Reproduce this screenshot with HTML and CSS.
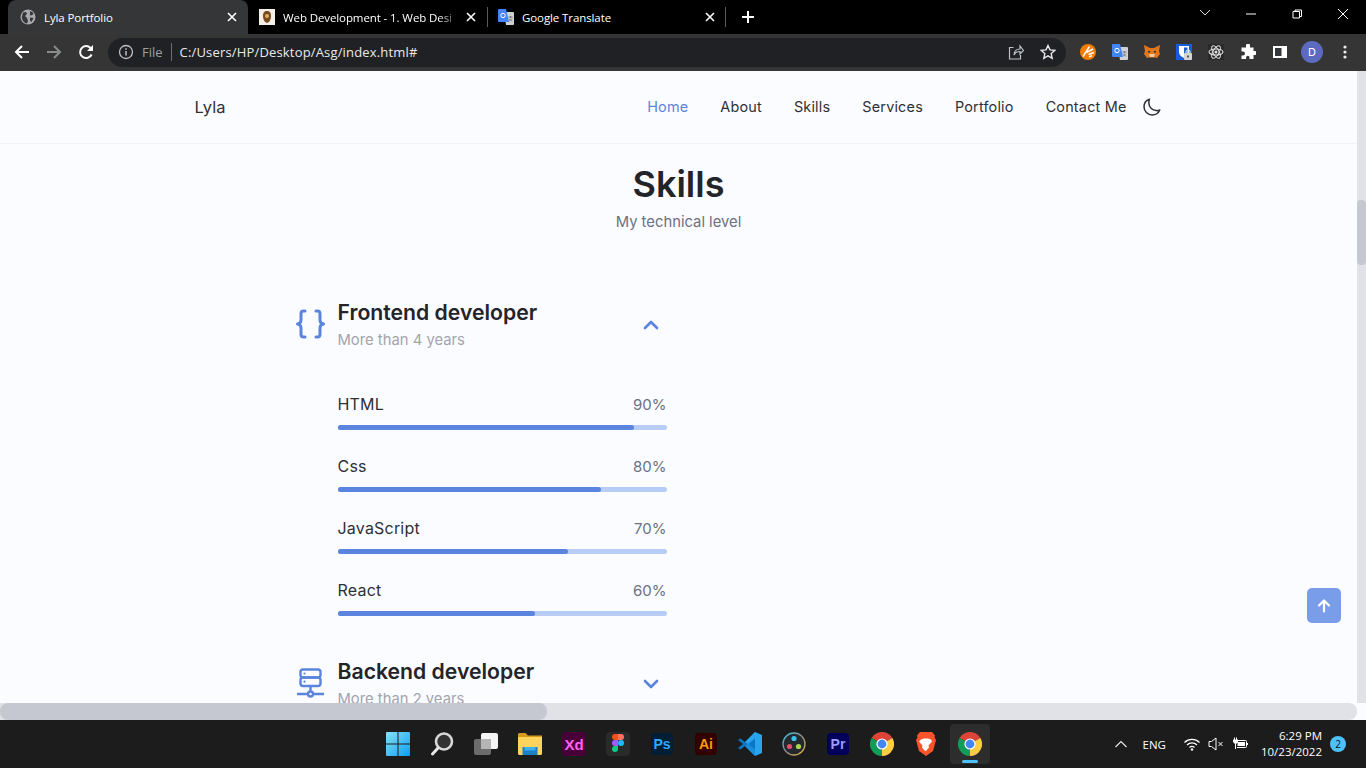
FILE: index.html
```html
<!DOCTYPE html>
<html lang="en">
  <head>
    <meta charset="UTF-8">
    <meta name="viewport" content="width=device-width, initial-scale=1.0">
    <title>Lyla Portfolio</title>
    <link rel="stylesheet" href="styles.css">
  </head>
  <body>
    <svg class="defs" width="0" height="0">
      <symbol id="chrome" viewBox="0 0 24 24">
        <path fill="#db4437" d="M12 12 1.6 6A12 12 0 0 1 22.4 6Z"/>
        <path fill="#0f9d58" d="M12 12 1.6 6A12 12 0 0 0 12 24Z"/>
        <path fill="#ffcd40" d="M12 12 22.4 6A12 12 0 0 1 12 24Z"/>
        <circle cx="12" cy="12" r="5.6" fill="#fff"/>
        <circle cx="12" cy="12" r="4.4" fill="#4285f4"/>
      </symbol>
      <symbol id="translate" viewBox="0 0 16 16">
        <path fill="#cfd2d6" d="M6 3h9a1 1 0 0 1 1 1v11a1 1 0 0 1-1 1H8Z"/>
        <path fill="#4285f4" d="M1 0h7l3 13H1a1 1 0 0 1-1-1V1a1 1 0 0 1 1-1Z"/>
        <circle cx="5" cy="6.500" r="2.200" fill="none" stroke="#fff" stroke-width="1"/>
        <path stroke="#777" stroke-width="1" d="M10.500 8h4M12.500 7v2M11 9.500l3 3M14 9.500l-3 3"/>
      </symbol>
      <symbol id="close" viewBox="0 0 10 10">
        <path stroke="#fff" stroke-width="1.600" d="M1 1l8 8M9 1l-8 8"/>
      </symbol>
    </svg>

    <div class="tabstrip">
      <div class="tab tab-active">
        <svg class="favicon" viewBox="0 0 16 16">
          <circle cx="8" cy="8" r="7.500" fill="#a8aaad"/>
          <path fill="#35363a" d="M3 3.500 6 3l1 2-2 2 2 2 1 3-1 2.500C4 14 2 11 1.800 8ZM10 2l3.500 2-1 2-2.500 .5ZM10 8.500l3.500 .5-2 4-1.500-1.500Z"/>
        </svg>
        <span class="tab-title">Lyla Portfolio</span>
        <svg class="tab-close"><use href="#close"/></svg>
      </div>
      <div class="tab">
        <svg class="favicon" viewBox="0 0 16 16">
          <rect width="16" height="16" fill="#f4f0e8"/>
          <path fill="#7a4a22" d="M8 2c3 0 4 2 4 5s-1 6-4 7c-3-1-4-4-4-7s1-5 4-5Z"/>
          <circle cx="8" cy="7" r="2" fill="#d8b35c"/>
        </svg>
        <span class="tab-title tab-title-cut">Web Development - 1. Web Desi</span>
        <svg class="tab-close"><use href="#close"/></svg>
      </div>
      <div class="tab tab-sep">
        <svg class="favicon"><use href="#translate"/></svg>
        <span class="tab-title">Google Translate</span>
        <svg class="tab-close"><use href="#close"/></svg>
      </div>
      <div class="new-tab">
        <svg width="12" height="12" viewBox="0 0 12 12"><path stroke="#fff" stroke-width="2" d="M6 0v12M0 6h12"/></svg>
      </div>
      <div class="win-controls">
        <svg class="win-btn" viewBox="0 0 46 28"><path fill="none" stroke="#ddd" d="M18 10l5 5 5-5"/></svg>
        <svg class="win-btn" viewBox="0 0 46 28"><path stroke="#fff" d="M18 14h10"/></svg>
        <svg class="win-btn" viewBox="0 0 46 28"><path fill="none" stroke="#fff" d="M19 11.500h6.500V18H19ZM21 11.500V10h6.500v6.500H25.500"/></svg>
        <svg class="win-btn" viewBox="0 0 46 28"><path stroke="#fff" d="M18 9l10 10M28 9l-10 10"/></svg>
      </div>
    </div>

    <div class="toolbar">
      <svg class="tool-icon" viewBox="0 0 16 16"><path fill="none" stroke="#fff" stroke-width="2" d="M15 8H2M8 2 2 8l6 6"/></svg>
      <svg class="tool-icon" viewBox="0 0 16 16"><path fill="none" stroke="#8a8b8d" stroke-width="2" d="M1 8h13M8 2l6 6-6 6"/></svg>
      <svg class="tool-icon" viewBox="0 0 16 16"><path fill="none" stroke="#fff" stroke-width="2" d="M13.600 10.500A6 6 0 1 1 12.500 4"/><path fill="#fff" d="M15 1v6H9Z"/></svg>
      <div class="omnibox">
        <svg class="omni-info" viewBox="0 0 16 16"><circle cx="8" cy="8" r="6.500" fill="none" stroke="#bdc1c6" stroke-width="1.300"/><path stroke="#bdc1c6" stroke-width="1.500" d="M8 7v4.500M8 4.300v1.500"/></svg>
        <span class="omni-scheme">File</span>
        <span class="omni-url">C:/Users/HP/Desktop/Asg/index.html#</span>
        <svg class="omni-icon" viewBox="0 0 16 16"><path fill="none" stroke="#bdc1c6" stroke-width="1.200" d="M5.500 3.500H1.500V15h11v-4M6 11c0-4 3-6 6-6V2l3.500 4.500L12 10V7.500c-2.500 0-5 1-6 3.500Z"/></svg>
        <svg class="omni-icon" viewBox="0 0 16 16"><path fill="none" stroke="#e8eaed" stroke-width="1.400" d="m8 1.500 2 4.400 4.800 .5-3.600 3.200 1 4.700L8 11.900l-4.200 2.400 1-4.700L1.200 6.400 6 5.900Z"/></svg>
      </div>
      <div class="extensions">
        <svg class="ext-icon" viewBox="0 0 16 16"><circle cx="8" cy="8" r="8" fill="#f57c00"/><path fill="none" stroke="#fff" stroke-width="1.500" d="M3 12.500 9.500 2.500M6.500 8.500l6.500-3.500M8.500 10.500l5.500-2M9 13l3-1.500"/></svg>
        <svg class="ext-icon"><use href="#translate"/></svg>
        <svg class="ext-icon" viewBox="0 0 16 16"><path fill="#e2761b" d="M0 1l6 3h4l6-3-1 6 1 3-3 4-2-.5H5L3 14l-3-4 1-3Z"/><path fill="#f6c6a0" d="M5 10h6l-1 3H6Z"/><path fill="#233447" d="M4 7h2v1.500H4ZM10 7h2v1.500h-2Z"/></svg>
        <svg class="ext-icon" viewBox="0 0 16 16"><rect width="16" height="16" fill="#175ddc"/><path fill="#fff" d="M3 2h10v6c0 3-2.500 5-5 6-2.500-1-5-3-5-6Z"/><path fill="#175ddc" d="M8 3.500h3.500V8c0 1.500-1.500 3-3.500 4Z"/><rect x="8" y="9" width="8" height="7" rx="1" fill="#d5d5d5"/><path fill="none" stroke="#d5d5d5" stroke-width="1.200" d="M10 9.500V8a2 2 0 0 1 4 0v1.500"/><rect x="11" y="11.500" width="2" height="2" fill="#555"/></svg>
        <svg class="ext-icon" viewBox="0 0 16 16"><rect width="16" height="16" fill="#2a2a2a"/><g fill="none" stroke="#ddd" stroke-width="1.100"><ellipse cx="8" cy="8" rx="7" ry="3"/><ellipse cx="8" cy="8" rx="7" ry="3" transform="rotate(60 8 8)"/><ellipse cx="8" cy="8" rx="7" ry="3" transform="rotate(120 8 8)"/></g><circle cx="8" cy="8" r="1.500" fill="#ddd"/></svg>
        <svg class="ext-icon" viewBox="0 0 16 16"><path fill="#fff" d="M6 1.500a2 2 0 0 1 4 0V3.500h3.500V7h1.300a2 2 0 0 1 0 4h-1.300v4H9.500v-1.500a1.700 1.700 0 0 0-3.400 0V15H1.500v-3.500H3a2 2 0 0 0 0-4H1.500v-4H6Z"/></svg>
        <svg class="ext-icon" viewBox="0 0 16 16"><rect x="1" y="2" width="14" height="12" fill="#fff"/><rect x="3" y="4" width="6.500" height="8" fill="#35363a"/></svg>
        <span class="avatar">D</span>
        <svg class="ext-icon" viewBox="0 0 16 16"><g fill="#e8eaed"><circle cx="8" cy="3" r="1.600"/><circle cx="8" cy="8" r="1.600"/><circle cx="8" cy="13" r="1.600"/></g></svg>
      </div>
    </div>

    <div class="viewport">
      <div class="page">
        <header class="site-header">
          <div class="nav-inner">
            <a class="logo">Lyla</a>
            <nav class="nav-menu">
              <a class="nav-link nav-active">Home</a>
              <a class="nav-link">About</a>
              <a class="nav-link">Skills</a>
              <a class="nav-link">Services</a>
              <a class="nav-link">Portfolio</a>
              <a class="nav-link">Contact Me</a>
            </nav>
            <svg class="moon" viewBox="0 0 18 18"><path fill="none" stroke="#2f3036" stroke-width="1.500" stroke-linejoin="round" d="M6.500 1.200C3.300 2.300 1 5.300 1 8.800 1 13.300 4.700 17 9.200 17c3.400 0 6.300-2 7.600-5-1.100 .5-2.300 .7-3.500 .6C9 12.400 6 9 5.800 5 5.800 3.600 6 2.300 6.500 1.200Z"/></svg>
          </div>
        </header>

        <section class="skills">
          <h2 class="section-title">Skills</h2>
          <span class="section-subtitle">My technical level</span>

          <div class="skills-container">
            <div class="skills-group">
              <div class="skills-header">
                <svg class="skills-icon" viewBox="0 0 30 30"><g fill="none" stroke="#5b84de" stroke-width="3" stroke-linecap="round" stroke-linejoin="round"><path d="M10 2H8.500C6.800 2 6 3 6 4.500v6.500c0 2-1 3.500-3.500 4C5 15.500 6 17 6 19v6.500C6 27 6.800 28 8.500 28H10"/><path d="M21 2h1.500C24.200 2 25 3 25 4.500v6.500c0 2 1 3.500 3.500 4-2.500 .5-3.500 2-3.500 4v6.500c0 1.500-.8 2.500-2.500 2.500H21"/></g></svg>
                <div class="skills-heading">
                  <h3 class="skills-title">Frontend developer</h3>
                  <span class="skills-years">More than 4 years</span>
                </div>
                <svg class="skills-arrow" viewBox="0 0 16 10"><path fill="none" stroke="#5b84de" stroke-width="2.600" stroke-linecap="round" stroke-linejoin="round" d="M2 8l6-6 6 6"/></svg>
              </div>

              <div class="skills-list">
                <div class="skill">
                  <div class="skill-row"><span class="skill-name">HTML</span><span class="skill-number">90%</span></div>
                  <div class="skill-bar"><div class="skill-fill" style="width: 90%"></div></div>
                </div>
                <div class="skill">
                  <div class="skill-row"><span class="skill-name">Css</span><span class="skill-number">80%</span></div>
                  <div class="skill-bar"><div class="skill-fill" style="width: 80%"></div></div>
                </div>
                <div class="skill">
                  <div class="skill-row"><span class="skill-name">JavaScript</span><span class="skill-number">70%</span></div>
                  <div class="skill-bar"><div class="skill-fill" style="width: 70%"></div></div>
                </div>
                <div class="skill">
                  <div class="skill-row"><span class="skill-name">React</span><span class="skill-number">60%</span></div>
                  <div class="skill-bar"><div class="skill-fill" style="width: 60%"></div></div>
                </div>
              </div>

              <div class="skills-header">
                <svg class="skills-icon" viewBox="0 0 30 30"><g fill="none" stroke="#5b84de" stroke-width="2.400"><rect x="5.500" y="1.500" width="20" height="8" rx="2.500"/><rect x="5.500" y="9.500" width="20" height="8.500" rx="2.500"/><path d="M15.500 18v5M2 26h11M18 26h11"/><circle cx="15.500" cy="26" r="2.500"/></g><circle cx="9.500" cy="5.500" r="1.100" fill="#5b84de"/><circle cx="9.500" cy="13.700" r="1.100" fill="#5b84de"/></svg>
                <div class="skills-heading">
                  <h3 class="skills-title">Backend developer</h3>
                  <span class="skills-years">More than 2 years</span>
                </div>
                <svg class="skills-arrow" viewBox="0 0 16 10"><path fill="none" stroke="#5b84de" stroke-width="2.600" stroke-linecap="round" stroke-linejoin="round" d="M2 2l6 6 6-6"/></svg>
              </div>
            </div>
          </div>
        </section>

        <a class="scroll-up">
          <svg width="14" height="14" viewBox="0 0 14 14"><path fill="none" stroke="#fff" stroke-width="2.200" stroke-linecap="round" stroke-linejoin="round" d="M7 12.500V2M2 6.500 7 1.500l5 5"/></svg>
        </a>
      </div>
      <div class="scroll-v"><div class="scroll-v-thumb"></div></div>
      <div class="scroll-h"><div class="scroll-h-thumb"></div></div>
      <div class="scroll-corner"></div>
    </div>

    <footer class="taskbar">
      <div class="task-apps">
        <div class="task-app">
          <svg width="24" height="24" viewBox="0 0 24 24">
            <defs><linearGradient id="winblue" x1="0" y1="0" x2="1" y2="1"><stop offset="0" stop-color="#86e0fb"/><stop offset="1" stop-color="#0d9ff0"/></linearGradient></defs>
            <path fill="url(#winblue)" d="M1 0h10.500v11.500H0V1a1 1 0 0 1 1-1ZM12.500 0H23a1 1 0 0 1 1 1v10.500H12.500ZM0 12.500h11.500V24H1a1 1 0 0 1-1-1ZM12.500 12.500H24V23a1 1 0 0 1-1 1H12.500Z"/>
          </svg>
        </div>
        <div class="task-app">
          <svg width="24" height="24" viewBox="0 0 24 24"><circle cx="14" cy="9.500" r="8" fill="#333" stroke="#d8d8d8" stroke-width="2.600"/><path stroke="#e8e8e8" stroke-width="3" stroke-linecap="round" d="M8 16l-5.500 6"/></svg>
        </div>
        <div class="task-app">
          <svg width="24" height="24" viewBox="0 0 24 24"><rect x="7" y="1" width="17" height="16" rx="2" fill="#f3f3f3"/><rect x="0" y="7" width="17" height="16" rx="2" fill="#6c6c6c"/><rect x="7" y="7" width="10" height="10" fill="#b5b5b5"/></svg>
        </div>
        <div class="task-app">
          <svg width="24" height="24" viewBox="0 0 24 24"><path fill="#d79a16" d="M0 2.500C0 1.500 .5 1 1.500 1h6L10 3.500h14V6H0Z"/><path fill="#fbd45c" d="M0 5h24v16.500c0 .8-.5 1.500-1.500 1.500h-21C.5 23 0 22.300 0 21.500Z"/><path fill="#1b7fc4" d="M4.500 15h15v8h-15Z"/><path fill="#3fb1ea" d="M6.500 15h11v3.500h-11Z"/></svg>
        </div>
        <div class="task-app"><span class="app-tile app-xd">Xd</span></div>
        <div class="task-app">
          <svg width="24" height="24" viewBox="0 0 24 24"><rect width="24" height="24" rx="4" fill="#2a2a2a"/><path fill="#f24e1e" d="M12 2H9a3 3 0 0 0 0 6h3Z"/><path fill="#ff7262" d="M12 2h3a3 3 0 0 1 0 6h-3Z"/><path fill="#a259ff" d="M12 8H9a3 3 0 0 0 0 6h3Z"/><circle cx="15" cy="11" r="3" fill="#1abcfe"/><path fill="#0acf83" d="M9 14h3v3a3 3 0 1 1-3-3Z"/></svg>
        </div>
        <div class="task-app"><span class="app-tile app-ps">Ps</span></div>
        <div class="task-app"><span class="app-tile app-ai">Ai</span></div>
        <div class="task-app">
          <svg width="24" height="24" viewBox="0 0 24 24"><path fill="#0b76c4" d="M17 0 7 10 2.500 6.500 0 8l5 4-5 4 2.500 1.500L7 14l10 10Z"/><path fill="#28a4ee" d="M17 0l7 3v18l-7 3V6.500L10 12l-3-2Z"/><path fill="#1a8fdd" d="M17 24 7 14l3-2 7 5.500Z"/></svg>
        </div>
        <div class="task-app">
          <svg width="24" height="24" viewBox="0 0 24 24"><defs><linearGradient id="resolve" x1="0" y1="0" x2="1" y2="1"><stop offset="0" stop-color="#45c4e8"/><stop offset=".5" stop-color="#8a8a8a"/><stop offset="1" stop-color="#e8b53c"/></linearGradient></defs><circle cx="12" cy="12" r="11" fill="#23282c" stroke="url(#resolve)" stroke-width="1.300"/><circle cx="12" cy="6.500" r="2.600" fill="#3ec3e8"/><circle cx="7.500" cy="14.500" r="2.600" fill="#e84a6e"/><circle cx="16.500" cy="14.500" r="2.600" fill="#a7d64a"/></svg>
        </div>
        <div class="task-app"><span class="app-tile app-pr">Pr</span></div>
        <div class="task-app"><svg width="24" height="24"><use href="#chrome"/></svg></div>
        <div class="task-app">
          <svg width="24" height="24" viewBox="0 0 24 24"><path fill="#fb542b" d="M6 0h12l3 3.500-.5 2L22 8l-3 11-7 5-7-5L2 8l1.500-2.500L3 3.500Z"/><path fill="#fff" d="M7 7.500l3-1h4l3 1 1 2-3.500 4 .5 2-3 3.500h-1L8 15.500l.5-2L5 9.500Z"/></svg>
        </div>
        <div class="task-app task-app-active">
          <svg width="24" height="24"><use href="#chrome"/></svg>
          <span class="task-indicator"></span>
        </div>
      </div>

      <div class="tray">
        <svg class="tray-chevron" viewBox="0 0 12 8"><path fill="none" stroke="#eee" stroke-width="1.100" d="M.5 7 6 1.500 11.500 7"/></svg>
        <span class="tray-lang">ENG</span>
        <svg class="tray-icon tray-wifi" viewBox="0 0 16 16"><g fill="none" stroke="#fff" stroke-width="1.200"><path d="M.5 6.500a10.500 10.500 0 0 1 15 0"/><path d="M3 9a7 7 0 0 1 10 0"/><path d="M5.500 11.500a3.500 3.500 0 0 1 5 0"/></g><circle cx="8" cy="13.500" r="1.200" fill="#fff"/></svg>
        <svg class="tray-icon tray-sound" viewBox="0 0 16 16"><path fill="none" stroke="#fff" d="M1 5.500h2.500L8 2v12L3.500 10.500H1ZM10.500 6l4 4M14.500 6l-4 4"/></svg>
        <svg class="tray-icon tray-battery" viewBox="0 0 16 16"><path fill="none" stroke="#fff" d="M5 4.500h8.500a1 1 0 0 1 1 1v5a1 1 0 0 1-1 1H5"/><path fill="#fff" d="M5.500 6h7.500v4H5.500ZM15 7h1v2h-1ZM2 1.500h1v2H2ZM4 1.500h1v2H4ZM1 3.500h5V6L4 8v5H3V8L1 6Z"/></svg>
        <div class="tray-clock"><span>6:29 PM</span><span>10/23/2022</span></div>
        <span class="tray-badge">2</span>
      </div>
    </footer>
  </body>
</html>
```

FILE: styles.css
```css
* {
  box-sizing: border-box;
}

html,
body {
  height: 100%;
}

body {
  margin: 0;
  display: flex;
  flex-direction: column;
  height: 768px;
  overflow: hidden;
  font-family: "Inter", "Liberation Sans", sans-serif;
  background-color: #fbfcff;
}

.defs {
  position: absolute;
}

/* browser window */
.tabstrip {
  display: flex;
  align-items: stretch;
  height: 34px;
  flex: none;
  padding-left: 8px;
  background-color: #000;
  color: #fff;
  font-family: "Open Sans", sans-serif;
  font-size: 11.500px;
  letter-spacing: -0.1px;
}

.tab {
  display: flex;
  align-items: center;
  width: 239px;
  padding: 0 11px 0 11px;
  position: relative;
}

.tab-active {
  width: 240px;
  padding-left: 12px;
  background-color: #353638;
  border-radius: 8px 8px 0 0;
}

.tab-sep::before,
.tab-sep::after {
  content: "";
  position: absolute;
  top: 7px;
  height: 20px;
  width: 1px;
  background-color: #5a5a5a;
}

.tab-sep::before {
  left: 0;
}

.tab-sep::after {
  right: 0;
}

.favicon {
  width: 16px;
  height: 16px;
  flex: none;
}

.tab-title {
  margin-left: 8px;
  flex: 1;
  white-space: nowrap;
}

.tab-title-cut {
  margin-right: 6px;
  -webkit-mask-image: linear-gradient(to right, #000 88%, transparent 100%);
  mask-image: linear-gradient(to right, #000 88%, transparent 100%);
}

.tab-close {
  width: 10px;
  height: 10px;
  flex: none;
}

.new-tab {
  display: flex;
  align-items: center;
  margin-left: 16px;
}

.win-controls {
  display: flex;
  margin-left: auto;
}

.win-btn {
  width: 46px;
  height: 28px;
}

.toolbar {
  display: flex;
  align-items: center;
  flex: none;
  height: 37px;
  padding: 0 0 1px 14px;
  background-color: #353535;
}

.tool-icon {
  width: 16px;
  height: 16px;
  flex: none;
  margin-right: 16px;
}

.omnibox {
  display: flex;
  align-items: center;
  flex: none;
  width: 958px;
  height: 29px;
  margin-left: -2px;
  padding: 0 10px;
  border-radius: 15px;
  background-color: #202124;
  font-family: "Open Sans", sans-serif;
  font-size: 13px;
}

.omni-info {
  width: 16px;
  height: 16px;
}

.omni-scheme {
  margin-left: 8px;
  padding-right: 8px;
  border-right: 1px solid #6b6d70;
  color: #9aa0a6;
  line-height: 18px;
}

.omni-url {
  margin-left: 8px;
  flex: 1;
  color: #e8eaed;
  letter-spacing: 0.17px;
}

.omni-icon {
  width: 16px;
  height: 16px;
  margin-left: 16px;
}

.extensions {
  display: flex;
  align-items: center;
  flex: none;
  margin-left: 14px;
}

.ext-icon {
  width: 16px;
  height: 16px;
  flex: none;
  margin-right: 16px;
}

.ext-icon:last-child {
  margin-right: 0;
}

.avatar {
  display: flex;
  align-items: center;
  justify-content: center;
  flex: none;
  width: 22px;
  height: 22px;
  margin: 0 14px 0 -3px;
  border-radius: 50%;
  background-color: #5c6bc0;
  color: #fff;
  font-size: 11px;
}

/* page */
.viewport {
  display: grid;
  grid-template-columns: 1fr 9px;
  grid-template-rows: 1fr 17px;
  flex: 1;
  min-height: 0;
}

.page {
  position: relative;
  overflow: hidden;
  background-color: #fbfcff;
}

.site-header {
  height: 73px;
  border-bottom: 1px solid #f0f1f5;
}

.nav-inner {
  display: flex;
  align-items: center;
  max-width: 968px;
  height: 100%;
  margin: 0 auto;
  padding: 0 2px 1px 0;
  color: #2f3036;
}

.logo {
  font-size: 16.500px;
  letter-spacing: 0.1px;
}

.nav-menu {
  display: flex;
  gap: 32px;
  margin-left: auto;
}

.nav-link {
  font-size: 14.400px;
  letter-spacing: 0.2px;
}

.nav-active {
  color: #5b84de;
}

.moon {
  width: 18px;
  height: 18px;
  margin-left: 16px;
}

.skills {
  display: flex;
  flex-direction: column;
  align-items: center;
  padding-top: 16px;
}

.section-title {
  margin: 0;
  font-size: 36px;
  line-height: 48px;
  font-weight: 600;
  color: #23242a;
}

.section-subtitle {
  margin-top: 4px;
  font-size: 14.800px;
  line-height: 20px;
  color: #6d7080;
}

.skills-container {
  width: 768px;
  margin-top: 66px;
}

.skills-group {
  width: 372px;
}

.skills-header {
  display: flex;
  align-items: center;
}

.skills-icon {
  width: 30px;
  height: 30px;
  flex: none;
  margin: 0 13px 2px 0;
}

.skills-heading {
  flex: 1;
}

.skills-title {
  margin: 0;
  font-size: 21.200px;
  line-height: 28px;
  font-weight: 600;
  color: #23242a;
}

.skills-years {
  display: block;
  margin-top: 2px;
  font-size: 14.800px;
  line-height: 24px;
  color: #a2a4ae;
}

.skills-arrow {
  width: 16px;
  height: 10px;
  margin: 0 8px 1px 0;
}

.skills-list {
  margin: 43px 0 41px 43px;
  display: flex;
  flex-direction: column;
  gap: 27px;
}

.skill-row {
  display: flex;
  justify-content: space-between;
  height: 20px;
  margin-bottom: 10px;
  font-size: 16px;
  line-height: 18px;
}

.skill-name {
  letter-spacing: 0.2px;
  color: #2f3036;
}

.skill-number {
  color: #6d7080;
  font-size: 15px;
  line-height: 20px;
}

.skill-bar {
  height: 5px;
  border-radius: 3px;
  background-color: #b7cdf6;
}

.skill-fill {
  height: 100%;
  border-radius: 3px;
  background-color: #5b84de;
}

.scroll-up {
  position: absolute;
  right: 16px;
  bottom: 80px;
  display: flex;
  align-items: center;
  justify-content: center;
  width: 34px;
  height: 35px;
  border-radius: 5px;
  background-color: #7a9dea;
}

.scroll-v {
  padding-top: 129px;
  background-color: #e1e2e7;
}

.scroll-v-thumb {
  height: 65px;
  border-radius: 4px;
  background-color: #c5c8d0;
}

.scroll-h {
  background-color: #e1e2e7;
  border-radius: 0 8px 8px 0;
}

.scroll-h-thumb {
  width: 547px;
  height: 100%;
  border-radius: 8px;
  background-color: #c5c8d0;
}

.scroll-corner {
  background-color: #fbfcff;
}

/* windows taskbar */
.taskbar {
  display: flex;
  align-items: center;
  flex: none;
  height: 48px;
  padding-left: 376px;
  background-color: #1c1c1c;
  color: #fff;
  font-family: "Open Sans", sans-serif;
  font-size: 12px;
}

.task-apps {
  display: flex;
}

.task-app {
  display: flex;
  align-items: center;
  justify-content: center;
  position: relative;
  width: 40px;
  height: 40px;
  margin: 0 2px;
  border-radius: 4px;
}

.task-app-active {
  background-color: #2d2d2d;
}

.task-indicator {
  position: absolute;
  left: 12px;
  bottom: 1px;
  width: 16px;
  height: 3px;
  border-radius: 2px;
  background-color: #4cc2ff;
}

.app-tile {
  display: flex;
  align-items: center;
  justify-content: center;
  width: 22px;
  height: 22px;
  border-radius: 4px;
  font-family: "Liberation Sans", sans-serif;
  font-size: 14px;
  font-weight: 700;
}

.app-xd {
  width: 24px;
  height: 24px;
  font-size: 15px;
  background-color: #470137;
  color: #ff61f6;
}

.app-ps {
  background-color: #001e36;
  color: #31a8ff;
}

.app-ai {
  background-color: #330000;
  color: #ff9a00;
}

.app-pr {
  background-color: #00005b;
  color: #9999ff;
}

.tray {
  display: flex;
  align-items: center;
  margin-left: auto;
  padding-right: 20px;
}

.tray-chevron {
  width: 12px;
  height: 8px;
  margin-right: 16px;
}

.tray-lang {
  font-size: 11.500px;
  margin-right: 18px;
}

.tray-icon {
  width: 16px;
  height: 16px;
  margin-right: 8px;
}

.tray-clock {
  display: flex;
  flex-direction: column;
  align-items: flex-end;
  margin-left: 5px;
  font-size: 11.500px;
  line-height: 16px;
}

.tray-badge {
  display: flex;
  align-items: center;
  justify-content: center;
  width: 16px;
  height: 16px;
  margin-left: 8px;
  border-radius: 50%;
  background-color: #4cc2ff;
  color: #111;
  font-size: 10px;
}
```
